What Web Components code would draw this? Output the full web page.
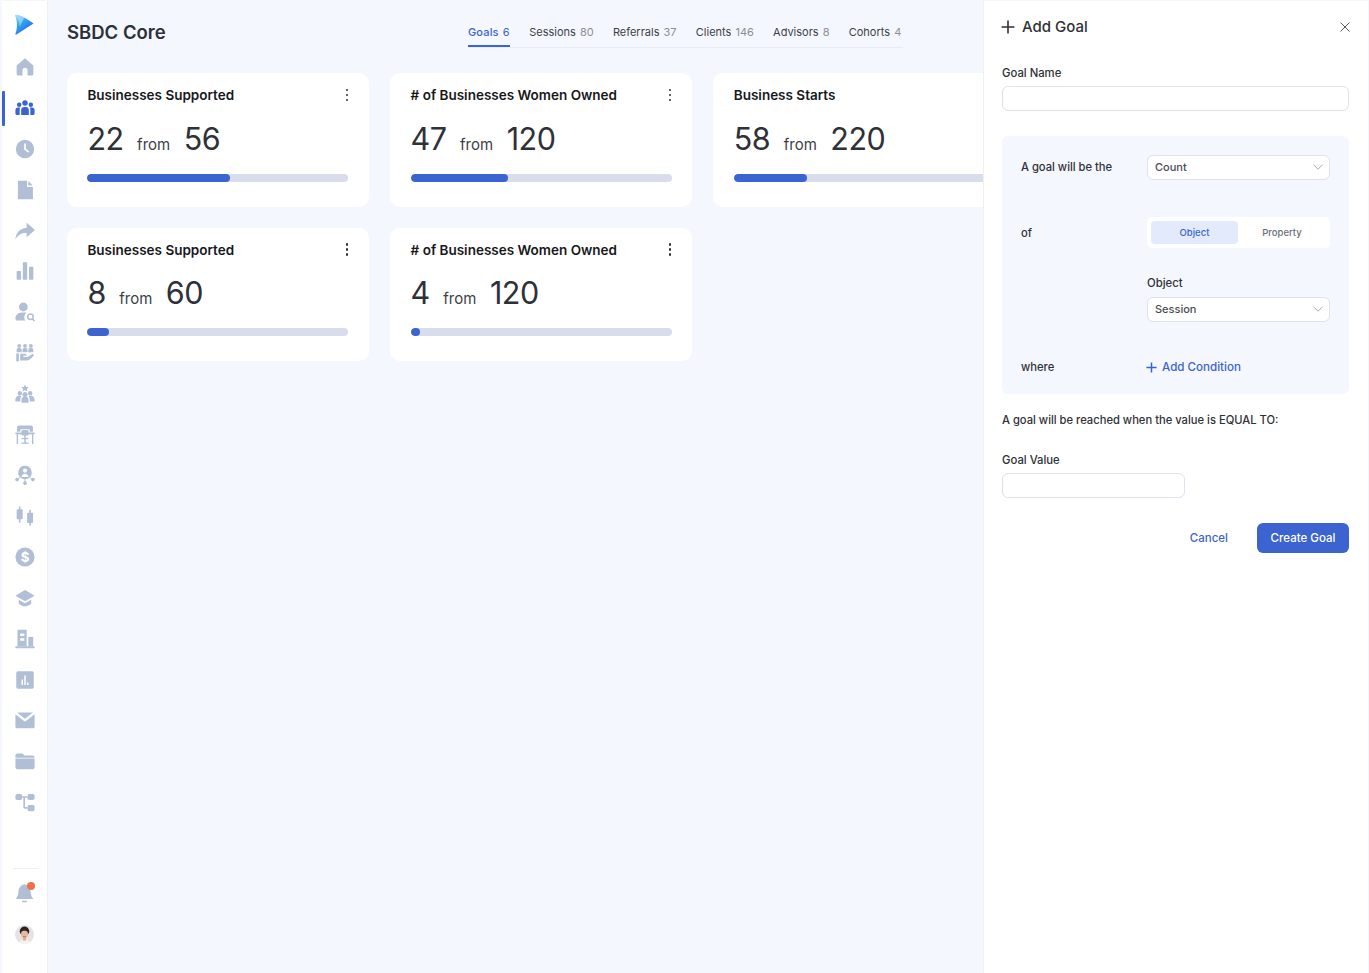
<!DOCTYPE html>
<html lang="en"><head><meta charset="utf-8"><title>SBDC Core</title>
<style>
html,body{margin:0;height:100%;}
body{background:#f5f7fe;font-family:Inter,"Liberation Sans",sans-serif;color:#2f3138;overflow:hidden;}
</style></head>
<body>
<app-shell>
  <app-sidebar slot="side"></app-sidebar>
  <main-view slot="main">
    <top-tabs slot="tabs"></top-tabs>
    <goal-card title-text="Businesses Supported" value="22" total="56" fill="143"></goal-card>
    <goal-card title-text="# of Businesses Women Owned" value="47" total="120" fill="97"></goal-card>
    <goal-card title-text="Business Starts" value="58" total="220" fill="73" nomenu></goal-card>
    <goal-card title-text="Businesses Supported" value="8" total="60" fill="22"></goal-card>
    <goal-card title-text="# of Businesses Women Owned" value="4" total="120" fill="9"></goal-card>
  </main-view>
  <goal-panel slot="panel"></goal-panel>
</app-shell>
<script>
function def(name, html, setup){
  customElements.define(name, class extends HTMLElement{
    constructor(){super();this.attachShadow({mode:'open'});}
    connectedCallback(){
      this.shadowRoot.innerHTML = typeof html==='function'?html(this):html;
      if(setup)setup(this);
    }
  });
}
def('app-shell',`<style>
:host{display:grid;grid-template-columns:47px 1fr 384px;height:973px;width:1369px;box-sizing:border-box;padding:1px 1px 0 2px;overflow:hidden}
.m{min-width:0;overflow:hidden}
</style><slot name="side"></slot><div class="m"><slot name="main"></slot></div><slot name="panel"></slot>`);

const I={
home:'<path d="M12 1.500 2 10.200V20.500a1.800 1.800 0 0 0 1.800 1.800H9v-6.500a3 3 0 0 1 6 0v6.500h5.200A1.800 1.800 0 0 0 22 20.500V10.200z"/>',
people:'<circle cx="12" cy="6" r="3.300"/><circle cx="5" cy="8" r="2.700"/><circle cx="19" cy="8" r="2.700"/><path d="M7.400 20.500v-6a3.800 3.800 0 0 1 3.600-3.600h2a3.800 3.800 0 0 1 3.600 3.600v6z"/><path d="M.5 19v-4.200a3.300 3.300 0 0 1 3.300-3.300h2.400a5 5 0 0 0-.6 2.400v6.600H2.400A1.900 1.900 0 0 1 .5 19zM23.500 19v-4.200a3.300 3.300 0 0 0-3.300-3.300h-2.400a5 5 0 0 1 .6 2.400v6.600h3.200a1.900 1.900 0 0 0 1.900-1.500z"/>',
clock:'<path fill-rule="evenodd" d="M12 1a11 11 0 1 1 0 22 11 11 0 0 1 0-22zm-1 4.500v7.200l5 3.700 1.100-1.500-4.100-3.100V5.500z"/>',
file:'<path d="M3.500 1h11v7.500h7V23h-18z"/><path d="M16 1.200 21.300 6.500H16z"/>',
share:'<path d="M14 2 24 10.800l-10 8.700v-5.200C8 14.200 3.500 16.500.5 22c.6-8 5-13 13.500-14z"/>',
bars:'<rect x="2" y="12" width="5.200" height="10.500" rx=".8"/><rect x="9.400" y="1.500" width="5.200" height="21" rx=".8"/><rect x="16.800" y="7" width="5.200" height="15.500" rx=".8"/>',
usersearch:'<circle cx="10" cy="6" r="5.300"/><path d="M.5 20c0-4 3-7.500 7.500-7.500h6a7 7 0 0 0-1.500 9.800H2.800A2.300 2.300 0 0 1 .5 20z"/><path fill="none" stroke="currentColor" stroke-width="1.800" d="M18.500 14.500a3.300 3.300 0 1 0 0 6.600 3.300 3.300 0 0 0 0-6.600zM21 20.300l2.400 2.400"/>',
team:'<circle cx="5" cy="3.500" r="2.300"/><circle cx="12" cy="3.500" r="2.300"/><circle cx="19" cy="3.500" r="2.300"/><path d="M2 11V8a2 2 0 0 1 2-2h2a2 2 0 0 1 2 2v3zM9 11V8a2 2 0 0 1 2-2h2a2 2 0 0 1 2 2v3zM16 11V8a2 2 0 0 1 2-2h2a2 2 0 0 1 2 2v3z"/><rect x="1.500" y="12.500" width="3.200" height="9.500"/><path d="M6.200 13h5.300c1.500 0 2.500 1 2.500 2.200h-4v1.500h5l5.500-3.200c1.200-.7 2.500.4 1.800 1.500C20 18.500 17 21 14 21H6.200z"/>',
star:'<path d="M12 .5l1.400 3 3.200.3-2.400 2.200.7 3.100-2.900-1.700-2.900 1.700.7-3.100-2.400-2.200 3.200-.3z"/><circle cx="5.800" cy="11" r="2.600"/><circle cx="18.200" cy="11" r="2.600"/><circle cx="12" cy="12.500" r="3"/><path d="M.5 21v-2.500c0-2.800 2.200-4.800 5-4.800 1 0 1.800.3 2.200.6C7 15.500 6.300 17 6.300 18.500V21zM23.500 21v-2.500c0-2.800-2.200-4.800-5-4.800-1 0-1.800.3-2.200.6.700 1.200 1.400 2.700 1.400 4.200V21zM7.800 22.500v-3.700c0-2.500 1.900-3.800 4.200-3.800s4.200 1.300 4.200 3.800v3.700z"/>',
desk:'<path d="M4.500 .5h15a2 2 0 0 1 2 2V8h-3.800V6.500a1.500 1.500 0 0 0-1.500-1.500H7.800a1.500 1.500 0 0 0-1.500 1.500V8H2.500V2.500a2 2 0 0 1 2-2z"/><rect x="7.800" y="6" width="8.400" height="6.500" rx="1.500"/><rect x=".5" y="9" width="23" height="2.200"/><rect x="2" y="11" width="1.700" height="12"/><rect x="20.300" y="11" width="1.700" height="12"/><rect x="11.100" y="12" width="1.800" height="9.500"/><rect x="7.800" y="15.500" width="8.400" height="1.500"/><rect x="7.800" y="21" width="8.400" height="1.600"/>',
network:'<path fill-rule="evenodd" d="M12 1a8 8 0 0 1 4.300 14.800c-1 .7-2.800 1.200-4.300 1.200s-3.300-.5-4.300-1.200A8 8 0 0 1 12 1zm0 3.200a2.500 2.500 0 1 0 0 5 2.500 2.500 0 0 0 0-5zM7.800 14.300h8.400c-.3-2.200-2.200-3.800-4.200-3.800s-3.900 1.600-4.200 3.800z"/><circle cx="2.500" cy="17.500" r="2.200"/><circle cx="21.500" cy="17.500" r="2.200"/><circle cx="12" cy="21.800" r="2.200"/><path fill="none" stroke="currentColor" stroke-width="1.200" d="M4 16.500 6 15M20 16.500 18 15M12 17v4"/>',
candle:'<rect x="4.600" y=".5" width="2" height="19.500"/><rect x="2" y="4" width="7.200" height="12" rx="1.200"/><rect x="17.100" y="4.500" width="2" height="19"/><rect x="14.500" y="8" width="7.200" height="12.500" rx="1.200"/>',
dollar:'<circle cx="12" cy="12" r="11.500"/><text x="12" y="17.800" text-anchor="middle" font-family="Inter,Liberation Sans,sans-serif" font-size="16" font-weight="700" fill="#fff">$</text>',
grad:'<path d="M12 2.500 .5 9.300 12 15.800 23.500 9.300z"/><path d="M4.500 14v4.500c2 2 4.800 3.500 7.500 3.500s5.500-1.500 7.500-3.500V14L12 18.300z"/>',
building:'<rect x=".5" y="20.800" width="23" height="2.200" rx=".6"/><path fill-rule="evenodd" d="M3 1h11v19.800H3zM6.200 5.500v3h5v-3zM6.200 11v3h5v-3z"/><rect x="16" y="9.500" width="5.800" height="11.300"/>',
report:'<path fill-rule="evenodd" d="M3.500 1.500h17a2 2 0 0 1 2 2v17a2 2 0 0 1-2 2h-17a2 2 0 0 1-2-2v-17a2 2 0 0 1 2-2zM7.800 11.500V18h1.800v-6.500zm3.300-5V18h1.800V6.500zm3.300 8.500v3h1.800v-3z"/>',
mail:'<path d="M2.500 3h19L12 10.500z"/><path d="M.5 5 12 14 23.500 5v15a2 2 0 0 1-2 2h-19a2 2 0 0 1-2-2z"/>',
folder:'<path d="M.5 5.500A2.500 2.500 0 0 1 3 3h6l2.500 2.500H21a2.500 2.500 0 0 1 2.500 2.500H.5z"/><path d="M.5 9h23v10.500A2.500 2.500 0 0 1 21 22H3a2.500 2.500 0 0 1-2.500-2.500z"/>',
flow:'<rect x=".5" y="2.500" width="8" height="7" rx="2"/><rect x="15" y="2.500" width="8.500" height="7" rx="2"/><rect x="15" y="15.500" width="8.500" height="7.500" rx="2"/><path fill="none" stroke="currentColor" stroke-width="2" d="M8 6h7M11 6v12c0 .5.300 1 1 1h3"/>',
bell:'<path d="M11 1.500A8 8 0 0 0 4 9.500c0 4.500-1.500 7-3.500 9h21c-2-2-3.500-4.500-3.500-9a8 8 0 0 0-7-8z"/><rect x="8" y="20.500" width="6" height="1.600" rx=".8"/>'
};
const order=['home','people','clock','file','share','bars','usersearch','team','star','desk','network','candle','dollar','grad','building','report','mail','folder','flow'];
def('nav-item',h=>`<style>
:host{display:flex;align-items:center;justify-content:center;height:40.830px;position:relative;color:#b0bfd6}
:host([active]){color:#3b64d0}
:host([active])::before{content:"";position:absolute;left:0;top:3px;width:3px;height:35px;background:#3b64d0;border-radius:1px}
svg{width:20px;height:20px;fill:currentColor;display:block}
</style><svg viewBox="0 0 24 24">${I[h.getAttribute('icon')]}</svg>`);
def('app-sidebar',`<style>
:host{display:flex;flex-direction:column;background:#fff;height:972px;width:45px;box-shadow:1px 0 0 #eef0f8}
.logo{height:45.800px;display:flex;justify-content:center;align-items:flex-start;padding-top:13px;box-sizing:border-box;margin-right:2px}
.sp{flex:1}
.div{height:1px;background:#eceef7;margin:0 9px 5px 11px}
.bell{height:40px;display:flex;align-items:center;justify-content:center;position:relative;color:#b0bfd6}
.bell svg{width:19px;height:20px;fill:currentColor;margin-top:-2px}
.dot{position:absolute;width:8px;height:8px;border-radius:50%;background:#f0704c;left:25px;top:8px}
.av{height:40px;display:flex;align-items:center;justify-content:center;padding-bottom:19px}
</style>
<div class="logo"><svg width="20" height="21" viewBox="0 0 20 21"><defs><linearGradient id="g" x1="0" y1="0" x2="0.75" y2="1"><stop offset="0" stop-color="#8cd6f8"/><stop offset=".45" stop-color="#36a0f2"/><stop offset="1" stop-color="#1b62e2"/></linearGradient></defs><path d="M2 .8c5 .4 12 4.500 17.500 8.700L2.500 20.500c-1 .4-1.300-.2-1-1C3.500 14 3.500 7 1.200 1.700 1 1 1.300.7 2 .8z" fill="url(#g)"/><path d="M2 .8c2.500.2 5.500 1.300 8.500 3C9 6 7 9 6 13 5.500 8.500 4 4.500 1.200 1.700 1 1 1.300.7 2 .8z" fill="#bfeafc" opacity=".55"/></svg></div>
<div id="n"></div><div class="sp"></div><div class="div"></div>
<div class="bell"><svg viewBox="0 0 22 23">${I.bell}</svg><span class="dot"></span></div>
<div class="av"><svg width="19" height="19" viewBox="0 0 20 20"><defs><clipPath id="c"><circle cx="10" cy="10" r="10"/></clipPath></defs><g clip-path="url(#c)"><rect width="20" height="20" fill="#e3e4e4"/><path d="M3 20c.6-3 3.500-4.500 7-4.500s6.400 1.500 7 4.500z" fill="#f4f3f1"/><ellipse cx="10" cy="6.500" rx="5" ry="4.800" fill="#2d2422"/><ellipse cx="10" cy="9.500" rx="3.600" ry="4.600" fill="#e7b9a3"/><rect x="8.500" y="12.500" width="3" height="4" fill="#e2ae98"/><path d="M6.500 7.500c1.500-2 5.500-2 7 0l-.5-3H7z" fill="#2d2422"/><path d="M8.500 12c1 .6 2 .6 3 0" stroke="#b8453f" stroke-width=".8" fill="none"/></g></svg></div>`,
h=>{const n=h.shadowRoot.getElementById('n');order.forEach(k=>{const e=document.createElement('nav-item');e.setAttribute('icon',k);if(k==='people')e.setAttribute('active','');n.appendChild(e);});});

def('main-view',`<style>
:host{display:block;padding:0 0 0 18px;width:1000px;box-sizing:border-box}
header{display:flex;align-items:flex-start;height:72px}
h1{margin:20px 0 0;font-size:18.500px;line-height:23px;font-weight:600;color:#2f3138;width:401px;white-space:nowrap}
.t{margin-top:20px}
.grid{display:grid;grid-template-columns:repeat(3,302.200px);grid-auto-rows:133.500px;gap:21px;}
</style><header><h1>SBDC Core</h1><div class="t"><slot name="tabs"></slot></div></header><div class="grid"><slot></slot></div>`);

def('top-tabs',`<style>
:host{display:flex;border-bottom:1px solid #e9ecf6;height:26px;box-sizing:content-box;width:435px;font-size:11px;line-height:23px;color:#3c3f47;gap:0}
span.tab{display:block;height:26px;box-sizing:border-box;white-space:nowrap;margin-right:19.200px}
span.tab b{font-weight:400;color:#8a8e98;margin-left:1px}
.on{color:#3b64d0;font-weight:500;border-bottom:2px solid #3b64d0;min-width:42px;letter-spacing:.15px}
.on b{color:#3b64d0!important}
</style>
<span class="tab on">Goals <b>6</b></span><span class="tab">Sessions <b>80</b></span><span class="tab">Referrals <b>37</b></span><span class="tab">Clients <b>146</b></span><span class="tab">Advisors <b>8</b></span><span class="tab">Cohorts <b>4</b></span>`);

def('goal-card',h=>`<style>
:host{display:block;background:#fff;border-radius:10px;padding:13px 20px 0 20.400px;box-sizing:border-box;}
.top{display:flex;justify-content:space-between;align-items:center;height:18px}
.ti{font-size:13.500px;font-weight:600;line-height:18px;color:#17181c;white-space:nowrap}
.m{width:3px;display:flex;flex-direction:column;gap:2.500px;margin-right:.5px}
.m i{display:block;width:2.500px;height:2.500px;border-radius:50%;background:#2f3138}
.n{display:flex;align-items:baseline;margin-top:15.500px;height:37px;line-height:37px;color:#2f3138}
.n b{font-weight:400;font-size:30.500px;letter-spacing:-.5px}
.n span{font-size:15px;margin:0 13.500px;color:#3c3f47}
.bar{height:8px;background:#d9dcea;border-radius:4px;margin-top:17px;width:261px;overflow:hidden}
.bar i{display:block;height:8px;background:#3b64d0;border-radius:4px;width:${h.getAttribute('fill')}px}
</style>
<div class="top"><div class="ti">${h.getAttribute('title-text')}</div>${h.hasAttribute('nomenu')?'':'<div class="m"><i></i><i></i><i></i></div>'}</div>
<div class="n"><b>${h.getAttribute('value')}</b><span>from</span><b>${h.getAttribute('total')}</b></div>
<div class="bar"><i></i></div>`);

def('field-box',`<style>
:host{display:flex;align-items:center;justify-content:space-between;height:24.500px;box-sizing:border-box;background:#fff;border:1px solid #dfe1ec;border-radius:6px;padding:0 6px 0 7px;font-size:11px;color:#4a4d55}
svg{display:block}
</style><slot></slot><svg width="10" height="6" viewBox="0 0 10 6" fill="none" stroke="#a6aab8" stroke-width="1"><path d="M.500.700 5 5.200 9.500.700"/></svg>`);

const plus=(s,c,w)=>`<svg width="${s}" height="${s}" viewBox="0 0 14 14" fill="none" stroke="${c}" stroke-width="${w}" style="display:block;flex:none"><path d="M7 .500v13M.500 7h13"/></svg>`;
def('goal-panel',`<style>
:host{display:block;background:#fff;height:972px;width:384px;box-sizing:border-box;padding:0 19px 0 18px;box-shadow:-1px 0 0 #eef0f8;position:relative;z-index:2;font-size:11.200px}
.hd{display:flex;align-items:center;height:51px;margin-left:-1px;box-sizing:border-box}
.hd h2{margin:0 0 0 7px;font-size:15px;font-weight:500;color:#2f3138;flex:1}
.x{margin-right:-1px}
label,.lb{display:block;font-size:11.300px;font-weight:500;color:#2f3138;line-height:14px}
.in{display:block;height:25px;box-sizing:border-box;border:1px solid #dfe1ec;border-radius:6px;background:#fff}
.g1{margin-top:14px}
.g1 .in{margin-top:6px}
.box{background:#f5f7fe;border-radius:6px;margin-top:25px;height:258px;padding:19px 19px 0 19px;box-sizing:border-box;display:grid;grid-template-columns:126px 183px;grid-template-rows:24.500px 31px auto auto;row-gap:37.500px;align-items:center;align-content:start;font-weight:500;color:#2f3138}
.tg{display:flex;background:#fff;border-radius:5px;height:31px;box-sizing:border-box;padding:4px;font-size:9.500px;font-weight:500;color:#6d7079;align-items:stretch}
.tg span{flex:1;display:flex;align-items:center;justify-content:center;border-radius:4px}
.tg .on{background:#e3eafb;color:#3b64d0;flex:0 0 87px}
.ob{grid-column:2;align-self:start;margin-top:-9.500px}
.ob .lb{margin-bottom:7px}
.add{display:flex;align-items:center;gap:5px;color:#3b64d0;margin-left:-1px;font-weight:500;white-space:nowrap;font-size:11.600px}
.wh,.ad2{height:14px;line-height:14px;margin-top:1px}
.note{margin:19px 0 0;line-height:14px;font-weight:500;color:#2f3138;white-space:nowrap}
.g2{margin-top:26px}
.g2 .in{width:183px;margin-top:6px}
.act{display:flex;justify-content:flex-end;align-items:center;margin-top:25px}
.c{color:#3b64d0;font-weight:500;margin-right:29px;font-size:11.500px}
.b{background:#3b64d0;color:#fff;font-weight:500;font-size:11.500px;width:92px;height:30px;border-radius:6px;display:flex;align-items:center;justify-content:center}
</style>
<div class="hd">${plus(14,'#2f3138',1.600)}<h2>Add Goal</h2><svg class="x" width="10" height="10" viewBox="0 0 10 10" fill="none" stroke="#55585f" stroke-width="1"><path d="M.500.500l9 9M9.500.500l-9 9"/></svg></div>
<div class="g1"><label>Goal Name</label><div class="in"></div></div>
<div class="box">
<div>A goal will be the</div><field-box>Count</field-box>
<div>of</div><div class="tg"><span class="on">Object</span><span>Property</span></div>
<div class="ob"><span class="lb">Object</span><field-box>Session</field-box></div>
<div class="wh">where</div><div class="add ad2">${plus(11,'#3b64d0',1.900)}Add Condition</div>
</div>
<p class="note">A goal will be reached when the value is EQUAL TO:</p>
<div class="g2"><label>Goal Value</label><div class="in"></div></div>
<div class="act"><span class="c">Cancel</span><span class="b">Create Goal</span></div>`);
</script>
</body></html>
